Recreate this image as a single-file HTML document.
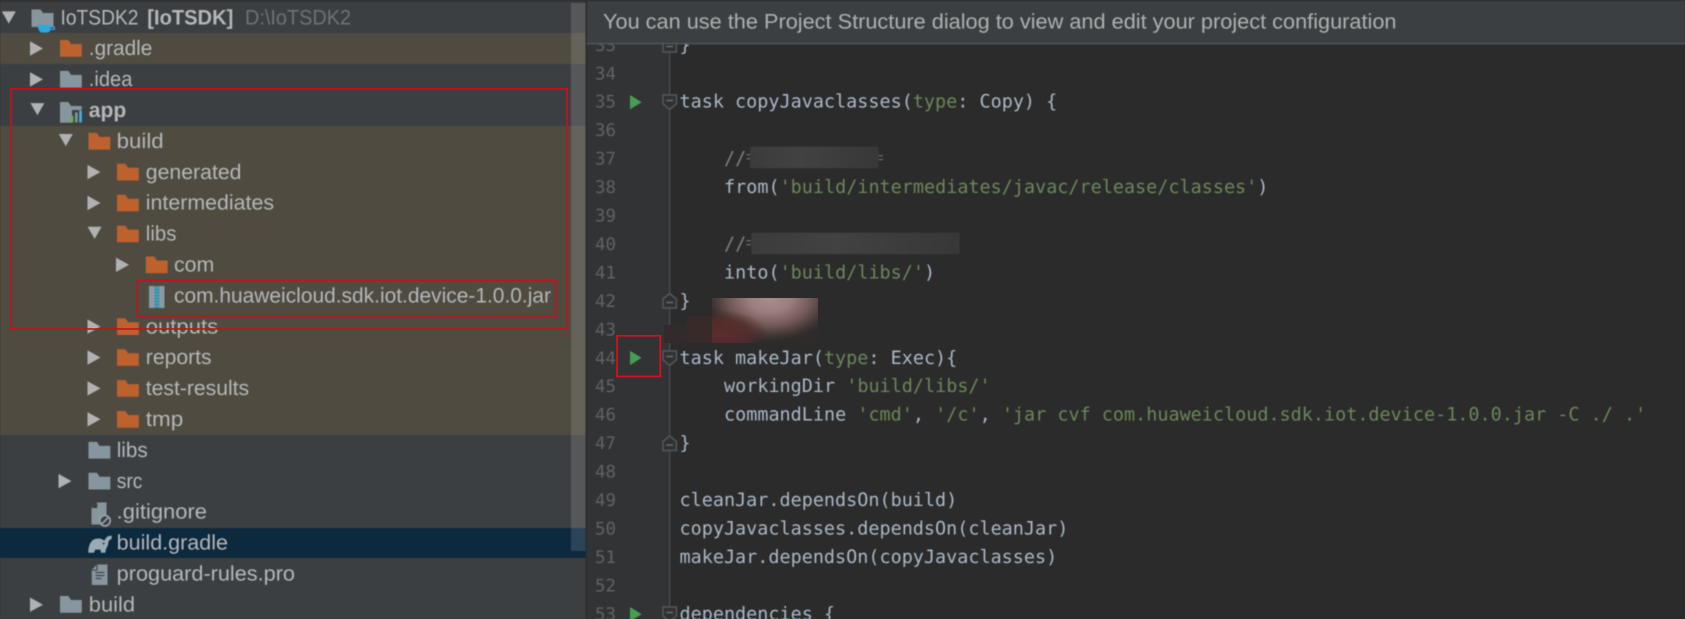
<!DOCTYPE html>
<html lang="en">
<head>
<meta charset="utf-8">
<title>IoTSDK2</title>
<style>
html,body{margin:0;padding:0;background:#2b2b2b;width:1685px;height:619px;overflow:hidden}
svg{display:block;position:absolute;left:0;top:0;text-rendering:geometricPrecision}
.t{font-family:"Liberation Sans",sans-serif;font-size:21px;fill:#b4b6b7}
.b{font-weight:bold}
.c{font-family:"DejaVu Sans Mono",monospace;font-size:18.47px;fill:#a9b7c6;white-space:pre}
.n{font-family:"DejaVu Sans Mono",monospace;font-size:17.4px;fill:#606366}
.s{fill:#6a8759}
.soft{filter:blur(.5px)}
</style>
</head>
<body>
<svg width="1685" height="619" viewBox="0 0 1685 619" xmlns="http://www.w3.org/2000/svg">
<defs>
<path id="ra" d="M0-7.2L13 0L0 7.2z" fill="#afb1b3"/>
<path id="da" d="M-.2-7.2H13.8L6.8 5z" fill="#afb1b3"/>
<path id="fo" d="M0 0h8.4l2.6 4h10.8v12.7H0z" fill="#bd612d"/>
<path id="fg" d="M0 0h8.4l2.6 4h10.8v12.7H0z" fill="#87959e"/>
<g id="op"><path d="M-6.7-7.5h13.4v9l-6.7 5.5-6.7-5.5z" fill="#303132" stroke="#55575a" stroke-width="1.5"/><path d="M-3.4-2h6.8" stroke="#6a6c6e" stroke-width="1.5"/></g>
<g id="cl"><path d="M-6.7 7.5h13.4v-9l-6.7-5.5-6.7 5.5z" fill="#303132" stroke="#55575a" stroke-width="1.5"/><path d="M-3.4 2h6.8" stroke="#6a6c6e" stroke-width="1.5"/></g>
<path id="run" d="M0 0L11.6 7.2L0 14.4z" fill="#499c54"/>
<radialGradient id="pink" gradientUnits="userSpaceOnUse" cx="0" cy="0" r="1" gradientTransform="translate(770 299) scale(68 44)">
<stop offset="0" stop-color="#aa8c8c"/><stop offset=".3" stop-color="#9c7e7e"/><stop offset=".62" stop-color="#6f5654"/><stop offset=".85" stop-color="#413634" stop-opacity=".85"/><stop offset="1" stop-color="#302c2c" stop-opacity="0"/>
</radialGradient>
<radialGradient id="dred" gradientUnits="userSpaceOnUse" cx="0" cy="0" r="1" gradientTransform="translate(722 334) scale(46 24)">
<stop offset="0" stop-color="#5e2d2d"/><stop offset=".6" stop-color="#552c2c" stop-opacity=".8"/><stop offset="1" stop-color="#4a2c2c" stop-opacity="0"/>
</radialGradient>
<linearGradient id="bl1" x1="0" x2="1" y1="0" y2="0">
<stop offset="0" stop-color="#3c3c3c"/><stop offset=".4" stop-color="#424242"/><stop offset=".85" stop-color="#3a3a3a"/><stop offset="1" stop-color="#383838"/>
</linearGradient>
<clipPath id="blobclip"><rect x="712" y="298" width="106" height="45"/></clipPath>
</defs>

<g class="soft">
<!-- sidebar -->
<rect x="0" y="0" width="586" height="619" fill="#3c3f41"/>
<rect x="0" y="0" width="586" height="2" fill="#313335"/>
<rect x="0" y="33" width="586" height="31" fill="#4f4b41"/>
<rect x="0" y="126" width="586" height="309" fill="#4f4b41"/>
<rect x="0" y="528" width="586" height="30" fill="#0d293e"/>

<!-- tree text -->
<text class="t" x="60.5" y="24.3" textLength="78" lengthAdjust="spacingAndGlyphs">IoTSDK2</text>
<text class="t b" x="147.3" y="24.3" textLength="86" lengthAdjust="spacingAndGlyphs">[IoTSDK]</text>
<text class="t" x="245" y="24.3" textLength="106" lengthAdjust="spacingAndGlyphs" style="fill:#6f7274">D:\IoTSDK2</text>
<text class="t" x="88.8" y="55.2" textLength="63.5" lengthAdjust="spacingAndGlyphs">.gradle</text>
<text class="t" x="88.8" y="86.1" textLength="43.6" lengthAdjust="spacingAndGlyphs">.idea</text>
<text class="t b" x="88.8" y="117" textLength="37.5" lengthAdjust="spacingAndGlyphs">app</text>
<text class="t" x="116.7" y="147.9" textLength="47" lengthAdjust="spacingAndGlyphs">build</text>
<text class="t" x="145.8" y="178.8" textLength="95.7" lengthAdjust="spacingAndGlyphs">generated</text>
<text class="t" x="145.8" y="209.7" textLength="128.2" lengthAdjust="spacingAndGlyphs">intermediates</text>
<text class="t" x="145.8" y="240.6" textLength="30.6" lengthAdjust="spacingAndGlyphs">libs</text>
<text class="t" x="174" y="271.5" textLength="40.3" lengthAdjust="spacingAndGlyphs">com</text>
<text class="t" x="174" y="302.4" textLength="377" lengthAdjust="spacingAndGlyphs">com.huaweicloud.sdk.iot.device-1.0.0.jar</text>
<text class="t" x="145.8" y="333.3" textLength="72.3" lengthAdjust="spacingAndGlyphs">outputs</text>
<text class="t" x="145.8" y="364.2" textLength="65.8" lengthAdjust="spacingAndGlyphs">reports</text>
<text class="t" x="145.8" y="395.1" textLength="103.3" lengthAdjust="spacingAndGlyphs">test-results</text>
<text class="t" x="145.8" y="426" textLength="37.5" lengthAdjust="spacingAndGlyphs">tmp</text>
<text class="t" x="116.7" y="456.9" textLength="31" lengthAdjust="spacingAndGlyphs">libs</text>
<text class="t" x="116.7" y="487.8" textLength="25.7" lengthAdjust="spacingAndGlyphs">src</text>
<text class="t" x="116.7" y="518.7" textLength="90.3" lengthAdjust="spacingAndGlyphs">.gitignore</text>
<text class="t" x="116.7" y="549.6" textLength="111.3" lengthAdjust="spacingAndGlyphs">build.gradle</text>
<text class="t" x="116.7" y="580.5" textLength="178.3" lengthAdjust="spacingAndGlyphs">proguard-rules.pro</text>
<text class="t" x="88.8" y="611.4" textLength="46.2" lengthAdjust="spacingAndGlyphs">build</text>

<!-- tree arrows -->
<use href="#da" transform="translate(2 18.6)"/>
<use href="#ra" transform="translate(30 48.5)"/>
<use href="#ra" transform="translate(30 79.4)"/>
<use href="#da" transform="translate(30.6 110.3)"/>
<use href="#da" transform="translate(59 141.2)"/>
<use href="#ra" transform="translate(87.5 172.1)"/>
<use href="#ra" transform="translate(87.5 203)"/>
<use href="#da" transform="translate(87.8 233.9)"/>
<use href="#ra" transform="translate(116 264.8)"/>
<use href="#ra" transform="translate(87.5 326.6)"/>
<use href="#ra" transform="translate(87.5 357.5)"/>
<use href="#ra" transform="translate(87.5 388.4)"/>
<use href="#ra" transform="translate(87.5 419.3)"/>
<use href="#ra" transform="translate(58.5 481.1)"/>
<use href="#ra" transform="translate(30 604.7)"/>

<!-- root module folder with cup -->
<path d="M31.5 9.5h9l2.5 3.5h10.5v14H31.5z" fill="#87959e"/>
<path d="M38 25h13v1.5h4v3.4h-4.3c-.8 1.6-2 2.6-3.7 2.6h-5c-2.3 0-4-2.6-4-7.5z" fill="#2ea9df"/>
<path d="M50.6 27.5h3v1.2h-3z" fill="#3c3f41"/>

<!-- folders -->
<use href="#fo" x="60" y="40"/>
<use href="#fg" x="60" y="70.9"/>

<!-- app module -->
<path d="M60 102h8.4l2.6 4h10.8v4H72v12.7H60z" fill="#87959e"/>
<rect x="70.8" y="115.8" width="2.6" height="6.6" fill="#62b543"/>
<rect x="75" y="112.5" width="2.6" height="9.9" fill="#87959e"/>
<rect x="79.2" y="110.5" width="2.6" height="11.9" fill="#40b6e0"/>

<use href="#fo" x="88.5" y="132.9"/>
<use href="#fo" x="117" y="163.8"/>
<use href="#fo" x="117" y="194.7"/>
<use href="#fo" x="117" y="225.6"/>
<use href="#fo" x="145.8" y="256.5"/>

<!-- jar -->
<rect x="149" y="286" width="15.5" height="22" fill="#8c9aa3"/>
<rect x="154.5" y="286" width="4.8" height="22" fill="#3c8ea6"/>
<path d="M154.5 288h4.8M154.5 291h4.8M154.5 294h4.8M154.5 297h4.8M154.5 300h4.8M154.5 303h4.8M154.5 306h4.8" stroke="#55a8c0" stroke-width="1"/>

<use href="#fo" x="117" y="318.3"/>
<use href="#fo" x="117" y="349.2"/>
<use href="#fo" x="117" y="380.1"/>
<use href="#fo" x="117" y="411"/>
<use href="#fg" x="88.5" y="441.9"/>
<use href="#fg" x="88.5" y="472.8"/>
<use href="#fg" x="60" y="596"/>

<!-- gitignore -->
<path d="M96.5 502.5h10v12l-5 10h-10v-17z" fill="#87959e"/>
<path d="M96.5 502.5v5h-5z" fill="#3c3f41"/>
<path d="M96.8 503v4.6h-4.6" fill="none" stroke="#3c3f41" stroke-width="1"/>
<circle cx="105" cy="520.7" r="5.2" fill="#3c3f41" stroke="#9aa7b0" stroke-width="1.6"/>
<path d="M102 523.7L108 517.7" stroke="#9aa7b0" stroke-width="1.6"/>

<!-- elephant -->
<path d="M88.3 552.7C88.3 544.5 91.5 538.6 97.5 538.6C100.8 538.2 103 539.8 104.6 540.6C105.4 538 107.8 535.2 111.9 535.8L111.4 539.4C109 539.4 108.6 541.2 108.2 543.8C107.7 547 105.6 548.4 105.4 552.7H100.9L100.5 549.6H95.2L94 552.7z" fill="#9aabb7"/>
<circle cx="103.6" cy="543.5" r=".9" fill="#0d293e"/>

<!-- proguard file -->
<path d="M97 564.5h10.5v20.5H91.8v-15.4z" fill="#87959e"/>
<path d="M95.5 572.5h9M95.5 575.5h9M95.5 578.5h6" stroke="#43474a" stroke-width="1.3"/>
<path d="M97 565v5h-5" fill="none" stroke="#3c3f41" stroke-width="1"/>

<!-- sidebar scrollbar -->
<rect x="571" y="3" width="14.5" height="548" fill="#ffffff" fill-opacity=".13"/>

<!-- divider -->
<rect x="585.5" y="0" width="1.5" height="619" fill="#2b2b2b"/>

<!-- editor -->
<rect x="587" y="0" width="1098" height="619" fill="#2b2b2b"/>
<rect x="587" y="0" width="82.7" height="619" fill="#313335"/>
<line x1="669.7" y1="44" x2="669.7" y2="619" stroke="#4b4d4f" stroke-width="1.3"/>

<!-- line numbers -->
<text class="n" x="595" y="50.8">33</text>
<text class="n" x="595" y="79.25">34</text>
<text class="n" x="595" y="107.7">35</text>
<text class="n" x="595" y="136.15">36</text>
<text class="n" x="595" y="164.6">37</text>
<text class="n" x="595" y="193.05">38</text>
<text class="n" x="595" y="221.5">39</text>
<text class="n" x="595" y="249.95">40</text>
<text class="n" x="595" y="278.4">41</text>
<text class="n" x="595" y="306.85">42</text>
<text class="n" x="595" y="335.3">43</text>
<text class="n" x="595" y="363.75">44</text>
<text class="n" x="595" y="392.2">45</text>
<text class="n" x="595" y="420.65">46</text>
<text class="n" x="595" y="449.1">47</text>
<text class="n" x="595" y="477.55">48</text>
<text class="n" x="595" y="506">49</text>
<text class="n" x="595" y="534.45">50</text>
<text class="n" x="595" y="562.9">51</text>
<text class="n" x="595" y="591.35">52</text>
<text class="n" x="595" y="619.8">53</text>

<!-- run icons -->
<use href="#run" x="630" y="95"/>
<use href="#run" x="630" y="350.7"/>
<use href="#run" x="630" y="607"/>

<!-- fold marks -->
<use href="#cl" x="669.7" y="44.5"/>
<use href="#op" x="669.7" y="102.5"/>
<use href="#cl" x="669.7" y="300.5"/>
<use href="#op" x="669.7" y="358.5"/>
<use href="#cl" x="669.7" y="443"/>
<use href="#op" x="669.7" y="614.5"/>

<!-- code -->
<text class="c" x="679.5" y="50.8">}</text>
<text class="c" x="679.5" y="107.7">task copyJavaclasses(<tspan class="s">type</tspan>: Copy) {</text>
<text class="c" x="724" y="164.6" style="fill:#808080">//</text>
<text class="c" x="724" y="193.05">from(<tspan class="s">'build/intermediates/javac/release/classes'</tspan>)</text>
<text class="c" x="724" y="249.95" style="fill:#808080">//</text>
<text class="c" x="724" y="278.4">into(<tspan class="s">'build/libs/'</tspan>)</text>
<text class="c" x="679.5" y="306.85">}</text>
<text class="c" x="679.5" y="363.75">task makeJar(<tspan class="s">type</tspan>: Exec){</text>
<text class="c" x="724" y="392.2">workingDir <tspan class="s">'build/libs/'</tspan></text>
<text class="c" x="724" y="420.65">commandLine <tspan class="s">'cmd'</tspan>, <tspan class="s">'/c'</tspan>, <tspan class="s">'jar cvf com.huaweicloud.sdk.iot.device-1.0.0.jar -C ./ .'</tspan></text>
<text class="c" x="679.5" y="449.1">}</text>
<text class="c" x="679.5" y="506">cleanJar.dependsOn(build)</text>
<text class="c" x="679.5" y="534.45">copyJavaclasses.dependsOn(cleanJar)</text>
<text class="c" x="679.5" y="562.9">makeJar.dependsOn(copyJavaclasses)</text>
<text class="c" x="679.5" y="619.8">dependencies {</text>

<!-- obscured comments -->
<rect x="746.5" y="154" width="3.5" height="1.4" fill="#666"/>
<rect x="746.5" y="158" width="3.5" height="1.4" fill="#666"/>
<rect x="746.5" y="240" width="4.5" height="1.4" fill="#666"/>
<rect x="746.5" y="244" width="4.5" height="1.4" fill="#666"/>
<rect x="878" y="155" width="5" height="1.3" fill="#666"/>
<rect x="878" y="159" width="5" height="1.3" fill="#666"/>
<rect x="750" y="146.7" width="128.6" height="21.5" fill="url(#bl1)"/>
<rect x="751.4" y="232.7" width="208.2" height="21.5" fill="url(#bl1)"/>

<!-- banner -->
<rect x="587" y="0" width="1098" height="43" fill="#3c3f41"/>
<rect x="587" y="0" width="1098" height="1.5" fill="#333537"/>
<rect x="587" y="43" width="1098" height="1.2" fill="#595c5e"/>
<text class="t" x="603" y="28.5" textLength="793.5" lengthAdjust="spacingAndGlyphs" style="fill:#adb0b1">You can use the Project Structure dialog to view and edit your project configuration</text>
</g>

<!-- pink obscured region (sharp left edge) -->
<rect x="664" y="325" width="23" height="18" fill="#322b2b"/>
<rect x="687" y="316" width="25" height="27" fill="#392a2a"/>
<g clip-path="url(#blobclip)">
<rect x="712" y="298" width="106" height="45" fill="#2f2b2b"/>
<ellipse cx="770" cy="299" rx="68" ry="44" fill="url(#pink)"/>
<rect x="712" y="298" width="106" height="45" fill="url(#dred)"/>
</g>

<!-- red annotation boxes -->
<rect x="10.8" y="88.8" width="556.5" height="240.2" fill="none" stroke="#c8101a" stroke-width="1.6"/>
<rect x="137.5" y="280.5" width="418.5" height="35.5" fill="none" stroke="#c8101a" stroke-width="1.6"/>
<rect x="617" y="335.8" width="43.3" height="40.6" fill="none" stroke="#dc0f1c" stroke-width="1.7"/>
</svg>
</body>
</html>
